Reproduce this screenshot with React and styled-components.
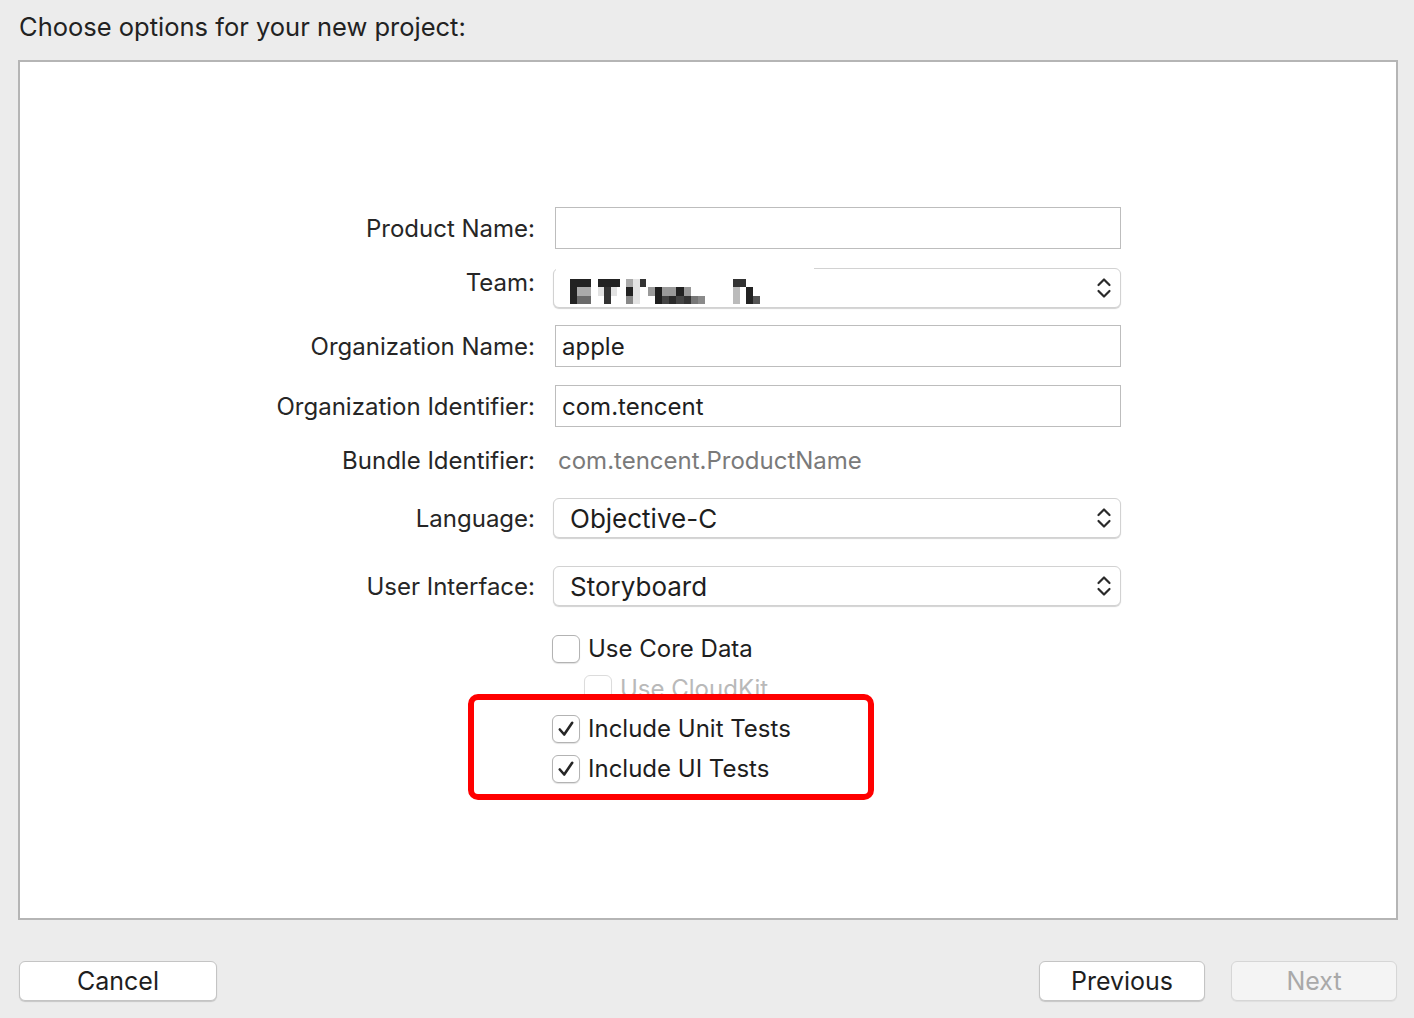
import React from 'react';
import styled, {createGlobalStyle} from 'styled-components';

const Global = createGlobalStyle`
  body {
    margin: 0;
    background: #ececec;
    font-family: Inter, "Liberation Sans", sans-serif;
    color: #222;
  }
`;

const Page = styled.div`
  width: 1414px;
  height: 1018px;
  display: flex;
  flex-direction: column;
`;

const Title = styled.div`
  height: 60px;
  box-sizing: border-box;
  padding: 12px 0 0 19px;
  font-size: 25.5px;
  line-height: 30px;
  color: #222;
`;

const Panel = styled.div`
  margin: 0 16px 0 18px;
  height: 860px;
  box-sizing: border-box;
  border: 2px solid #b5b5b5;
  background: #fff;
  padding-top: 145px;
  display: flex;
  flex-direction: column;
`;

const Row = styled.div`
  display: grid;
  grid-template-columns: 515px 566px;
  column-gap: 20px;
  align-items: center;
  height: ${p => p.h}px;
  margin-top: ${p => p.mt || 0}px;
  position: relative;
  z-index: ${p => (p.front ? 1 : 'auto')};
`;

const Label = styled.div`
  text-align: right;
  font-size: 24px;
  color: #262626;
  transform: translateY(${p => (p.lift ? -p.lift : 0)}px);
`;

const Field = styled.div`
  height: 42px;
  box-sizing: border-box;
  border: 1px solid #bdbdbd;
  padding: 0 6px;
  font-size: 24px;
  display: flex;
  align-items: center;
  color: #1e1e1e;
`;

const Popup = styled.div`
  position: relative;
  margin-left: -2px;
  width: 568px;
  height: 40px;
  box-sizing: border-box;
  border: 1px solid #d2d2d2;
  border-radius: 6px;
  box-shadow: 0 1px 1px rgba(0, 0, 0, 0.18);
  background: #fff;
  display: flex;
  align-items: center;
  justify-content: space-between;
  padding: 0 8px 0 16px;
  font-size: 26px;
  color: #1e1e1e;
`;

const Mask = styled.div`
  position: absolute;
  top: -2px;
  left: 2px;
  width: 258px;
  height: 8px;
  background: #fff;
`;

const Plain = styled.div`
  font-size: 24px;
  color: #7a7a7a;
  padding-left: 3px;
`;

const Check = styled.label`
  display: flex;
  align-items: center;
  gap: 8px;
  margin-left: ${p => (p.indent ? 29 : -3)}px;
  font-size: 24px;
  color: ${p => (p.disabled ? '#b9b9b9' : '#1e1e1e')};
`;

const Box = styled.span`
  width: 28px;
  height: 28px;
  box-sizing: border-box;
  border: 1px solid ${p => (p.disabled ? '#dcdcdc' : '#b3b3b3')};
  border-radius: 6px;
  background: #fff;
  box-shadow: 0 1px 1px rgba(0, 0, 0, ${p => (p.disabled ? 0.05 : 0.12)});
  display: flex;
  align-items: center;
  justify-content: center;
`;

const Group = styled.div`
  position: relative;
  margin-top: 12px;
`;

const Highlight = styled.div`
  position: absolute;
  top: -20px;
  bottom: -18px;
  left: 448px;
  width: 406px;
  box-sizing: border-box;
  border: 6px solid #ff0000;
  border-radius: 10px;
  background: #fff;
`;

const Footer = styled.div`
  margin-top: 41px;
  padding: 0 17px 0 19px;
  display: flex;
  justify-content: space-between;
`;

const Buttons = styled.div`
  display: flex;
  gap: 26px;
`;

const Button = styled.button`
  width: ${p => p.w}px;
  height: 40px;
  border: 1px solid ${p => (p.disabled ? '#d6d6d6' : '#c4c4c4')};
  border-radius: 6px;
  background: ${p => (p.disabled ? '#f4f4f4' : '#fff')};
  box-shadow: 0 1px 1px rgba(0, 0, 0, ${p => (p.disabled ? 0.06 : 0.16)});
  font-family: inherit;
  font-size: 25px;
  color: ${p => (p.disabled ? '#a9a9a9' : '#1e1e1e')};
  padding: 0;
`;

const Chevrons = () => (
  <svg width="16" height="28" viewBox="0 0 16 28">
    <path d="M2.5 11 L8 5.5 L13.5 11" fill="none" stroke="#2a2a2a" strokeWidth="2.2" strokeLinecap="round" strokeLinejoin="round"/>
    <path d="M2.5 17 L8 22.5 L13.5 17" fill="none" stroke="#2a2a2a" strokeWidth="2.2" strokeLinecap="round" strokeLinejoin="round"/>
  </svg>
);

const Tick = () => (
  <svg width="20" height="20" viewBox="0 0 20 20">
    <path d="M3.8 10.5 L8.2 15.5 L16.2 3.8" fill="none" stroke="#262626" strokeWidth="2.6" strokeLinecap="round" strokeLinejoin="round"/>
  </svg>
);

// redacted team name, drawn as a mosaic
const blocks = [
  [0, 0, 21, 8, '#222'], [0, 8, 7, 17, '#222'], [7, 8, 14, 9, '#aaa'], [7, 17, 14, 8, '#6a6a6a'],
  [28, 0, 22, 8, '#222'], [28, 8, 6, 9, '#e2e2e2'], [34, 8, 7, 17, '#333'], [41, 8, 6, 9, '#e2e2e2'],
  [56, 0, 7, 8, '#aaa'], [56, 8, 7, 9, '#222'], [56, 17, 7, 8, '#888'],
  [63, 0, 7, 25, '#e4e4e4'], [70, 0, 6, 8, '#333'],
  [78, 8, 7, 9, '#9a9a9a'], [85, 8, 7, 17, '#1e1e1e'], [92, 8, 7, 9, '#9a9a9a'], [92, 17, 7, 8, '#444'],
  [99, 8, 7, 9, '#999'], [106, 8, 8, 9, '#222'], [114, 8, 7, 9, '#999'],
  [99, 17, 7, 8, '#2a2a2a'], [106, 17, 8, 8, '#444'], [114, 17, 7, 8, '#333'], [121, 17, 7, 8, '#777'],
  [128, 17, 7, 8, '#8a8a8a'],
  [163, 0, 13, 8, '#333'], [163, 8, 7, 17, '#bbb'], [176, 8, 7, 17, '#222'], [183, 17, 7, 8, '#555'],
];

const Redacted = () => (
  <svg width="200" height="26" viewBox="0 0 200 26" style={{marginTop: 8}}>
    {blocks.map(([x, y, w, h, c], i) => <rect key={i} x={x} y={y} width={w} height={h} fill={c}/>)}
  </svg>
);

const App = () => {
  return (
    <Page>
      <Global/>
      <Title>Choose options for your new project:</Title>
      <Panel>
        <Row h={42}>
          <Label>Product Name:</Label>
          <Field/>
        </Row>
        <Row h={40} mt={19}>
          <Label lift={6}>Team:</Label>
          <Popup>
            <Mask/>
            <Redacted/>
            <Chevrons/>
          </Popup>
        </Row>
        <Row h={42} mt={17}>
          <Label>Organization Name:</Label>
          <Field>apple</Field>
        </Row>
        <Row h={42} mt={18}>
          <Label>Organization Identifier:</Label>
          <Field>com.tencent</Field>
        </Row>
        <Row h={40} mt={13}>
          <Label>Bundle Identifier:</Label>
          <Plain>com.tencent.ProductName</Plain>
        </Row>
        <Row h={40} mt={18}>
          <Label>Language:</Label>
          <Popup>
            <span>Objective-C</span>
            <Chevrons/>
          </Popup>
        </Row>
        <Row h={40} mt={28}>
          <Label>User Interface:</Label>
          <Popup>
            <span>Storyboard</span>
            <Chevrons/>
          </Popup>
        </Row>
        <Row h={28} mt={28}>
          <span/>
          <Check><Box/>Use Core Data</Check>
        </Row>
        <Row h={28} mt={12}>
          <span/>
          <Check indent disabled><Box disabled/>Use CloudKit</Check>
        </Row>
        <Group>
          <Highlight/>
          <Row h={28} front>
            <span/>
            <Check><Box><Tick/></Box>Include Unit Tests</Check>
          </Row>
          <Row h={28} mt={12} front>
            <span/>
            <Check><Box><Tick/></Box>Include UI Tests</Check>
          </Row>
        </Group>
      </Panel>
      <Footer>
        <Button w={198}>Cancel</Button>
        <Buttons>
          <Button w={166}>Previous</Button>
          <Button w={166} disabled>Next</Button>
        </Buttons>
      </Footer>
    </Page>
  );
};

export default App;
